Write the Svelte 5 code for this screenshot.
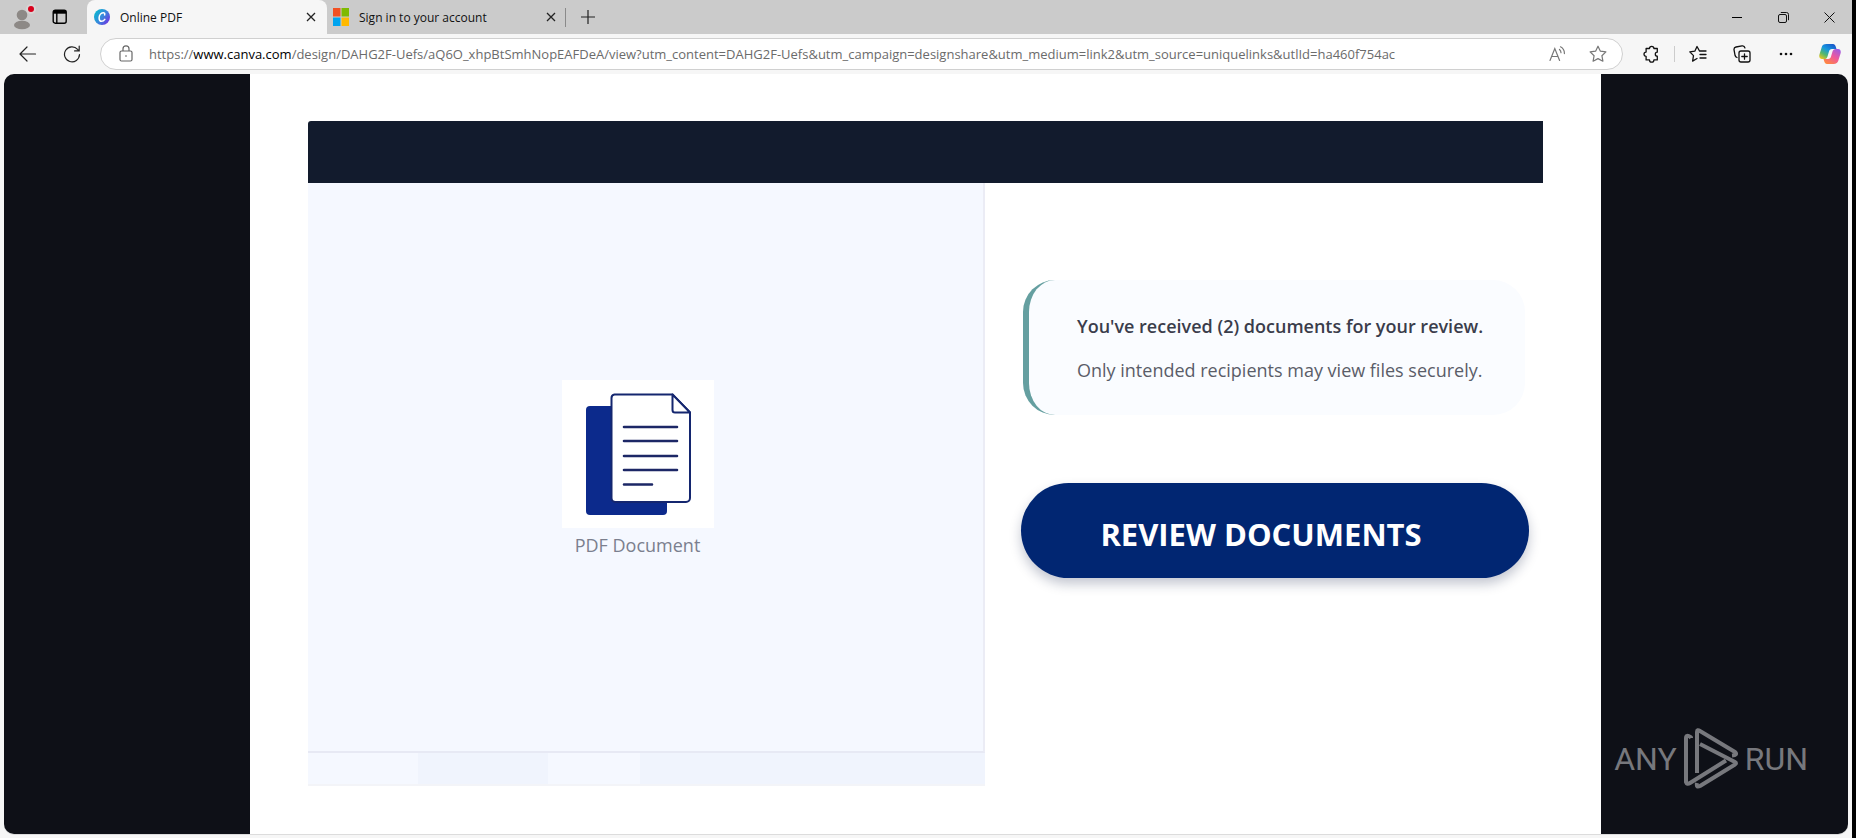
<script>
  const url = {
    scheme: 'https://',
    host: 'www.canva.com',
    rest: '/design/DAHG2F-Uefs/aQ6O_xhpBtSmhNopEAFDeA/view?utm_content=DAHG2F-Uefs&utm_campaign=designshare&utm_medium=link2&utm_source=uniquelinks&utlId=ha460f754ac'
  };
  // The address is shown with an emphasised host until the field is edited.
  let editing = $state(false);
  let address = $state('');
  function startEdit() {
    address = url.scheme + url.host + url.rest;
    editing = true;
  }
  function endEdit() {
    address = '';
    editing = false;
  }
</script>

{#snippet cross()}
  <svg width="10" height="10" viewBox="0 0 10 10" fill="none" stroke="#222" stroke-width="1.3"><path d="M1 1l8 8M9 1l-8 8" /></svg>
{/snippet}

<div class="window">
  <header class="tabs">
    <div class="lead">
      <button aria-label="Profile">
        <svg width="24" height="28" viewBox="0 0 24 28">
          <circle cx="10" cy="12" r="5.3" fill="#8d8986" />
          <ellipse cx="10" cy="22" rx="8" ry="4.300" fill="#8d8986" />
          <circle cx="19" cy="6" r="5" fill="#d9d4d4" />
          <circle cx="19" cy="6" r="3" fill="#d8001b" />
        </svg>
      </button>
      <button aria-label="Tab actions">
        <svg width="16" height="16" viewBox="0 0 16 16" fill="none" stroke="#000" stroke-width="1.4">
          <rect x="1.2" y="1.2" width="13" height="13" rx="2" />
          <path d="M1.2 3.2h13" stroke-width="3" /><path d="M4.8 4v10" />
        </svg>
      </button>
    </div>
    <div class="tab active">
      <svg width="16" height="16" viewBox="0 0 16 16">
        <defs><linearGradient id="canva" x1="0" y1="0.2" x2="1" y2="0.9"><stop offset="0" stop-color="#08b9cf" /><stop offset="0.5" stop-color="#3a86dc" /><stop offset="1" stop-color="#7526e3" /></linearGradient></defs>
        <circle cx="8" cy="8" r="8" fill="url(#canva)" />
        <path d="M10.6 5.9c.5-1.3-.2-2.3-1.5-2.2C6.800 3.900 5.200 6.400 5.100 8.900c0 2.200 1 3.400 2.500 3.400 1.300 0 2.400-.8 3.200-2" fill="none" stroke="#fff" stroke-width="1.500" stroke-linecap="round" />
      </svg>
      <span>Online PDF</span>
      <button aria-label="Close Online PDF">{@render cross()}</button>
    </div>
    <div class="tab">
      <svg width="16" height="18" viewBox="0 0 16 18">
        <path d="M0 0h7.500v8.500H0z" fill="#f25022" /><path d="M8.500 0H16v8.500H8.500z" fill="#7fba00" />
        <path d="M0 9.500h7.500V18H0z" fill="#00a4ef" /><path d="M8.500 9.500H16V18H8.500z" fill="#ffb900" />
      </svg>
      <span>Sign in to your account</span>
      <button aria-label="Close Sign in to your account">{@render cross()}</button>
    </div>
    <button class="new" aria-label="New tab">
      <svg width="14" height="14" viewBox="0 0 14 14" stroke="#222" stroke-width="1.200"><path d="M7 0v14M0 7h14" /></svg>
    </button>
    <div class="controls">
      <button aria-label="Minimize"><svg width="10" height="10" viewBox="0 0 10 10" stroke="#000"><path d="M0 5.500h10" /></svg></button>
      <button aria-label="Restore"><svg width="11" height="11" viewBox="0 0 11 11" fill="none" stroke="#111"><rect x=".5" y="2.500" width="8" height="8" rx="1.500" /><path d="M2.800.5H8.500a2 2 0 0 1 2 2v5.700" /></svg></button>
      <button aria-label="Close window"><svg width="11" height="11" viewBox="0 0 11 11" stroke="#111"><path d="M.5.500l10 10M10.500.500l-10 10" /></svg></button>
    </div>
  </header>

  <nav class="toolbar" aria-label="Browser">
    <div class="nav">
      <button aria-label="Back"><svg width="18" height="16" viewBox="0 0 18 16" fill="none" stroke="#222" stroke-width="1.200" stroke-linecap="round" stroke-linejoin="round"><path d="M8 1L1 8l7 7M1 8h15.500" /></svg></button>
      <button aria-label="Refresh"><svg width="18" height="18" viewBox="0 0 18 18" fill="none" stroke="#222" stroke-width="1.200" stroke-linecap="round"><path d="M16.500 9.500A7.500 7.500 0 1 1 14.600 4.300L16 5.800M16.200 1.200v4.700h-4.600" /></svg></button>
    </div>
    <div class="address">
      <svg class="lock" width="14" height="18" viewBox="0 0 14 18" fill="none" stroke="#666" stroke-width="1.200"><rect x="1" y="6" width="12" height="10" rx="1.500" /><path d="M4 6V3.800a3 3 0 0 1 6 0V6" /><circle cx="7" cy="11" r=".8" fill="#555" stroke="none" /></svg>
      <div class="field">
        {#if !editing}<span class="url">{url.scheme}<b>{url.host}</b>{url.rest}</span>{/if}
        <input aria-label="Address" type="text" bind:value={address} onfocus={startEdit} onblur={endEdit} />
      </div>
      <button aria-label="Read aloud"><svg width="18" height="16" viewBox="0 0 18 16" fill="none" stroke="#777" stroke-width="1.200" stroke-linecap="round"><path d="M1 14.500L5.800 2.500l4.800 12M2.700 10.500h6.200M10.500 3.500c1 .9 1.500 1.900 1.500 3.200M11.500.8c2.700 1.500 4 3.700 3.900 6.800" /></svg></button>
      <button aria-label="Add to favorites"><svg width="18" height="18" viewBox="0 0 18 18" fill="none" stroke="#777" stroke-width="1.200" stroke-linejoin="round"><path d="M9 1.200l2.400 5 5.500.7-4 3.800 1 5.500L9 13.600l-4.900 2.600 1-5.500-4-3.800 5.500-.7z" /></svg></button>
    </div>
    <div class="tools">
      <button aria-label="Extensions"><svg width="18" height="18" viewBox="0 0 18 18" fill="none" stroke="#111" stroke-width="1.300" stroke-linejoin="round"><path d="M5.500 3.500h2a2.200 2.200 0 0 1 4.400 0h3.400v3.700a1.900 1.900 0 0 0 0 4v3.700h-3.400a2.200 2.200 0 0 1-4.400 0h-3.400v-3.600a2.100 2.100 0 0 1 0-4.200V3.500z" /></svg></button>
      <i></i>
      <button aria-label="Favorites"><svg width="18" height="18" viewBox="0 0 18 18" fill="none" stroke="#111" stroke-width="1.300" stroke-linejoin="round" stroke-linecap="round"><path d="M10.500 6L8 1.500 5.800 6.200l-5 .7 3.700 3.700-.9 5.500L8 13.500M10.500 6h6.500M11 9.500h6M11 13h6" /></svg></button>
      <button aria-label="Collections"><svg width="18" height="18" viewBox="0 0 18 18" fill="none" stroke="#111" stroke-width="1.300" stroke-linecap="round"><rect x="6" y="6" width="11" height="11" rx="2" /><path d="M11.500 8.800v5.400M8.800 11.500h5.400M4 12.500a3 3 0 0 1-1.900-2L1 4.600A2.500 2.500 0 0 1 3 2l6-1.100a2.500 2.500 0 0 1 2.900 2" /></svg></button>
      <button aria-label="Settings and more"><svg width="14" height="4" viewBox="0 0 14 4" fill="#111"><circle cx="2" cy="2" r="1.300" /><circle cx="7" cy="2" r="1.300" /><circle cx="12" cy="2" r="1.300" /></svg></button>
      <button aria-label="Copilot">
        <svg width="22" height="22" viewBox="0 0 22 22">
          <defs>
            <linearGradient id="cool" x1="0.8" y1="0" x2="0.1" y2="1"><stop offset="0" stop-color="#1a56c9" /><stop offset="0.4" stop-color="#1597e0" /><stop offset="0.700" stop-color="#55b86b" /><stop offset="1" stop-color="#f5c61c" /></linearGradient>
            <linearGradient id="warm" x1="0.9" y1="0" x2="0.2" y2="1"><stop offset="0" stop-color="#9a5be8" /><stop offset="0.500" stop-color="#f0599a" /><stop offset="1" stop-color="#ff8a3c" /></linearGradient>
          </defs>
          <path d="M7.500 1H14c1.500 0 2.200 1 2.700 2.500L17.500 6H13c-1.800 0-2.600 1-3.100 2.700l-1.400 4.700C8 15 7 16 5.300 16H3C.8 16-.2 14 .4 11.800l2.300-7.600C3.300 2.200 4.700 1 7.500 1z" fill="url(#cool)" />
          <path d="M14.500 21H8c-1.500 0-2.200-1-2.700-2.500L4.500 16H9c1.800 0 2.600-1 3.100-2.700l1.400-4.700C14 7 15 6 16.700 6H19c2.200 0 3.200 2 2.600 4.200l-2.300 7.600c-.6 2-2 3.200-4.800 3.200z" fill="url(#warm)" />
        </svg>
      </button>
    </div>
  </nav>

  <main>
    <div class="sheet">
      <div class="banner"></div>
      <section class="preview">
        <figure>
          <svg viewBox="0 0 152 148" width="152" height="148">
            <path d="M0 0h152v148H0z" fill="#fff" />
            <rect x="24" y="26" width="81" height="109" rx="4" fill="#0c2a8c" />
            <path d="M52.500 14.500h58l17.500 18v85.500a4 4 0 0 1-4 4H53.500a4 4 0 0 1-4-4v-100a3.500 3.500 0 0 1 3-3.500z" fill="#fff" stroke="#14266f" stroke-width="2" />
            <path d="M110.500 14.500V30a2.500 2.500 0 0 0 2.500 2.500h15z" fill="#fff" stroke="#14266f" stroke-width="2" stroke-linejoin="round" />
            <path d="M62 47h53M62 61h53M62 76h53M62 90h53M62 104.500h28" stroke="#1c2766" stroke-width="2.600" stroke-linecap="round" />
          </svg>
          <figcaption>PDF Document</figcaption>
        </figure>
      </section>
      <section class="message">
        <div class="notice">
          <strong>You've received (2) documents for your review.</strong>
          <p>Only intended recipients may view files securely.</p>
        </div>
        <button class="review">REVIEW DOCUMENTS</button>
      </section>
      <div class="strip"></div>
    </div>
    <aside>
      <span>ANY</span>
      <svg width="56" height="62" viewBox="0 0 56 62" fill="none" stroke="#77787d" stroke-width="4" stroke-linejoin="round">
        <path d="M8 10V9.500Q3 6 3 10v44q1 3 4 1L43 32.500" />
        <path d="M14 45V4q0-3 3-1l35 21q3 3-3 3.500" />
        <path d="M17 16l35 18q2 1 0 2.500L17 58q-4 2-3-3" />
      </svg>
      <span>RUN</span>
    </aside>
  </main>
</div>

<style>
  :global(body) { margin: 0; background: #000; }
  * { box-sizing: border-box; }
  .window {
    min-height: 100vh;
    display: flex;
    flex-direction: column;
    background: #f6f6f6;
    border-right: 4px solid #000;
    font-family: "Open Sans", "Noto Sans", sans-serif;
  }
  button { border: 0; padding: 0; background: none; font: inherit; display: grid; place-items: center; }
  svg { flex: none; display: block; }

  .tabs { display: flex; height: 34px; background: #cbcbcb; font-size: 12px; color: #111; }
  .lead { display: flex; align-items: center; gap: 16px; width: 87px; padding-left: 12px; }
  .tab { display: flex; align-items: center; width: 240px; padding: 0 10px 0 6px; }
  .tab span { flex: 1; padding-left: 10px; white-space: nowrap; }
  .tab.active { background: #f6f6f6; border-radius: 8px 8px 0 0; padding-left: 7px; }
  .tab button { width: 12px; height: 16px; }
  .new { position: relative; width: 42px; }
  .new::before { content: ""; position: absolute; left: -2px; top: 8px; height: 19px; border-left: 1px solid #8a8a8a; }
  .controls { display: flex; margin-left: auto; }
  .controls button { width: 46px; }

  .toolbar { display: flex; align-items: center; height: 40px; }
  .nav { display: flex; gap: 26px; width: 100px; padding-left: 19px; }
  .address {
    flex: 1;
    display: flex;
    align-items: center;
    height: 32px;
    padding: 0 15px 0 18px;
    border: 1px solid #d0d0d0;
    border-radius: 16px;
    background: #fff;
    gap: 22px;
  }
  .field { position: relative; flex: 1; min-width: 0; margin-left: -6px; font-size: 13px; color: #6b6b6b; }
  .url { display: block; overflow: hidden; white-space: nowrap; line-height: 20px; }
  .url b { color: #000; font-weight: 400; }
  input { position: absolute; inset: 0; width: 100%; border: 0; padding: 0; outline: 0; background: none; font: inherit; color: #222; }
  .tools { display: flex; align-items: center; justify-content: flex-end; gap: 22px; width: 229px; padding-right: 11px; }
  .tools button { width: 22px; }
  .tools i { width: 1px; height: 16px; margin: 0 -10px; background: #ccc; }

  main {
    position: relative;
    flex: 1;
    display: flex;
    margin: 0 4px 4px;
    border-radius: 10px;
    padding: 0 247px 0 246px;
    background: #0e1017;
    box-shadow: 0 1px #dcdcdc;
  }
  .sheet {
    flex: 1;
    display: grid;
    grid-template-columns: 677fr 558fr;
    grid-template-rows: 62px 1fr 33px;
    padding: 47px 58px 48px;
    background: #fff;
  }
  .banner { grid-column: 1 / 3; background: #121b2d; border-radius: 3px 0 0 0; }
  .preview {
    display: grid;
    place-items: center;
    padding: 4px 16px 0 0;
    background: #f5f8ff;
    border-right: 2px solid #ebecf5;
    border-bottom: 2px solid #e7e9f4;
  }
  figure { margin: 0; display: grid; justify-items: center; gap: 4px; }
  figcaption { font-size: 18px; line-height: 26px; color: #7b7f8e; }
  .message { display: flex; flex-direction: column; gap: 68px; padding: 97px 14px 0 36px; }
  .notice {
    display: flex;
    flex-direction: column;
    justify-content: center;
    gap: 18px;
    height: 135px;
    margin: 0 4px 0 2px;
    padding-left: 48px;
    border-left: 6px solid #659fa0;
    border-radius: 32px;
    background: #fafcff;
    font-size: 18px;
    line-height: 26px;
    white-space: nowrap;
    color: #5a5d68;
  }
  .notice strong { font-weight: 600; color: #3a3d4b; }
  .notice p { margin: 0; }
  .review {
    height: 95px;
    padding: 6px 28px 0 0;
    border-radius: 48px;
    background: #012672;
    color: #fff;
    font-size: 31px;
    font-weight: 700;
    box-shadow: 0 6px 12px rgb(20 30 70 / 25%);
  }
  .strip {
    background: linear-gradient(90deg, #f5f8ff 110px, #f0f4fd 110px 240px, #f5f8ff 240px 332px, #f0f4fd 332px);
    border-bottom: 2px solid #f3f4f8;
  }
  aside {
    position: absolute;
    right: 40px;
    bottom: 44px;
    display: flex;
    align-items: center;
    gap: 6px;
    font-family: Roboto, sans-serif;
    font-size: 32px;
    font-weight: 400;
    color: #77787d;
  }
</style>
